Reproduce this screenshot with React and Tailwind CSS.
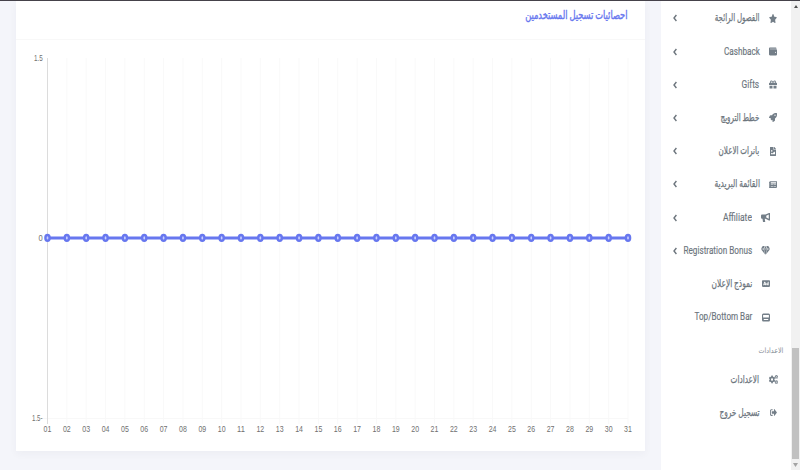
import { useLayoutEffect, useRef, useState } from 'react';
import { FaStar, FaWallet, FaGift, FaRocket, FaFileImage, FaNewspaper, FaAd, FaCogs, FaSignOutAlt } from 'react-icons/fa';

// Condenses a label horizontally so that it spans the given width.
function Label({ children, width, className = '' }) {
  const ref = useRef(null);
  const [scale, setScale] = useState(1);
  useLayoutEffect(() => {
    setScale(width / ref.current.offsetWidth);
  }, [width]);
  return (
    <span className="flex shrink-0" style={{ width }}>
      <span ref={ref} className={`block shrink-0 origin-right whitespace-nowrap ${className}`} style={{ transform: `scaleX(${scale})` }}>
        {children}
      </span>
    </span>
  );
}

function BarIcon({ className }) {
  return (
    <svg className={className} viewBox="0 0 18 18" preserveAspectRatio="none" fill="currentColor">
      <path fillRule="evenodd" d="M3 1H15Q18 1 18 4V14Q18 17 15 17H3Q0 17 0 14V4Q0 1 3 1ZM2.5 4V9H15.5V4ZM4 12V14H14V12Z" />
    </svg>
  );
}

function HornIcon({ className }) {
  return (
    <svg className={className} viewBox="0 0 18 18" preserveAspectRatio="none" fill="currentColor">
      <path fillRule="evenodd" d="M2 3H9L16 0H18V15H16L9 11.5H7.5L8.5 18H4L3 11.5H2Q0 11.5 0 9V5.500Q0 3 2 3ZM10.500 5.500V9L15.500 11.500V3Z" />
    </svg>
  );
}

function DiamondIcon({ className }) {
  return (
    <svg className={className} viewBox="0 0 18 18" preserveAspectRatio="none" fill="currentColor">
      <path d="M3.5 0H7.500L5 5.500H0ZM9 0 12 5.500H6ZM10.500 0H14.500L18 5.500H13ZM0 6.300H5L8.300 17ZM5.800 6.300H12.200L9 18ZM13 6.300H18L9.700 17Z" />
    </svg>
  );
}

const items = [
  { text: 'الفصول الرائجة', w: 45, Icon: FaStar, arrow: true },
  { text: 'Cashback', w: 36, Icon: FaWallet, arrow: true },
  { text: 'Gifts', w: 17.5, Icon: FaGift, arrow: true },
  { text: 'خطط الترويج', w: 38.5, Icon: FaRocket, arrow: true },
  { text: 'بانرات الاعلان', w: 40.5, Icon: FaFileImage, size: 'w-[6px]', arrow: true },
  { text: 'القائمة البريدية', w: 45.5, Icon: FaNewspaper, arrow: true },
  { text: 'Affiliate', w: 29, Icon: HornIcon, size: 'w-[9px]', arrow: true, inset: true },
  { text: 'Registration Bonus', w: 68.5, Icon: DiamondIcon, size: 'w-[9px]', arrow: true, inset: true },
  { text: 'نموذج الإعلان', w: 40.5, Icon: FaAd, inset: true },
  { text: 'Top/Bottom Bar', w: 57.5, Icon: BarIcon, inset: true },
];
const settings = [
  { text: 'الاعدادات', w: 28.5, Icon: FaCogs, size: 'w-[9px]' },
  { text: 'تسجيل خروج', w: 40.5, Icon: FaSignOutAlt, size: 'w-[7px]' },
];

function Item({ text, w, Icon, arrow, inset, size = 'w-[8px]' }) {
  const latin = /^[A-Z]/.test(text);
  return (
    <li className={`flex h-[33.2px] items-center pl-[11.5px] ${inset ? 'pr-[21px]' : 'pr-[13.5px]'}`}>
      <span className="ml-[9px] flex w-[9px] shrink-0 justify-center">
        <Icon className={`h-[9px] shrink-0 text-[#737e88] ${size}`} preserveAspectRatio="none" />
      </span>
      <Label width={w} className={latin ? 'text-[10px] leading-[14px] [-webkit-text-stroke:0.15px]' : 'text-[11px] leading-[14px] [-webkit-text-stroke:0.25px]'}>{text}</Label>
      {arrow && (
        <svg className="mr-auto h-[8px] w-[4px] shrink-0" viewBox="0 0 4 8" fill="none" stroke="currentColor" strokeWidth="1.4">
          <path d="M3.400 1 1 4 3.400 7" />
        </svg>
      )}
    </li>
  );
}

const days = Array.from({ length: 31 }, (_, i) => ({ label: String(i + 1).padStart(2, '0'), x: 47.5 + i * 19.35 }));

function Chart() {
  return (
    <svg className="block h-[411px] w-[629px]" viewBox="16 40 629 411" fontFamily="Liberation Sans, sans-serif" fontSize="9" fill="#707070">
      {days.map(({ x, label }) => (
        <g key={label}>
          <path d={`M${x} 58V424`} stroke="#f9f9f9" />
          <text x={x - 3.9} y="432.2" textLength="7.8" lengthAdjust="spacingAndGlyphs">{label}</text>
        </g>
      ))}
      <path d="M42 418.5H628" stroke="#f8f8f8" />
      <path d="M47.5 58V424" stroke="#dcdcdc" />
      <text x="34" y="60.8" textLength="8.7" lengthAdjust="spacingAndGlyphs">1.5</text>
      <text x="38.5" y="241" textLength="4.2" lengthAdjust="spacingAndGlyphs">0</text>
      <text x="32" y="420.8" textLength="10.5" lengthAdjust="spacingAndGlyphs">1.5-</text>
      <path d="M47.5 237.9H628" stroke="#6777ef" strokeWidth="3" />
      {days.map(({ x, label }) => (
        <ellipse key={label} cx={x} cy="237.9" rx="2.1" ry="2.9" fill="#c8cfff" stroke="#6777ef" strokeWidth="2.4" />
      ))}
    </svg>
  );
}

export default function App() {
  return (
    <div dir="rtl" className="flex h-[470px] w-[800px] overflow-hidden border-t border-[#45424a] bg-[#f4f5fa] font-['Roboto','DejaVu_Sans',sans-serif]">
      <div dir="ltr" className="order-3 flex-1 pl-[16px]">
        <section className="h-[450px] w-[629px] bg-white shadow-[0_3px_8px_rgba(45,50,80,0.04)]">
          <h2 dir="rtl" className="flex h-[39px] border-b border-[#f8f8f8] pt-[6.5px] pr-[18px] text-[#6777ef]">
            <Label width={102} className="text-[11.5px] leading-[15px] [-webkit-text-stroke:0.4px]">احصائيات تسجيل المستخدمين</Label>
          </h2>
          <Chart />
        </section>
      </div>
      <aside className="order-2 w-[130px] shrink-0 bg-white pt-[0.8px] text-[#6c757d]">
        <ul>{items.map((item) => <Item key={item.text} {...item} />)}</ul>
        <div className="flex h-[29.5px] items-center pt-[6px] pr-[8px] text-[#868e96]">
          <Label width={24.5} className="text-[7.5px] leading-[10px]">الاعدادات</Label>
        </div>
        <ul>{settings.map((item) => <Item key={item.text} {...item} />)}</ul>
      </aside>
      <div className="order-1 flex w-[9px] shrink-0 flex-col items-center bg-[#f1f1f1]">
        <svg className="mt-[4px] h-[4px] w-[4px]" viewBox="0 0 4 4"><path d="M2 0 4 3H0Z" fill="#505050" /></svg>
        <div className="mt-[339px] h-[111px] w-[7px] bg-[#c1c1c1]" />
        <svg className="mt-[4px] h-[4px] w-[5px]" viewBox="0 0 5 4"><path d="M0 0H5L2.5 4Z" fill="#a3a3a3" /></svg>
      </div>
    </div>
  );
}
